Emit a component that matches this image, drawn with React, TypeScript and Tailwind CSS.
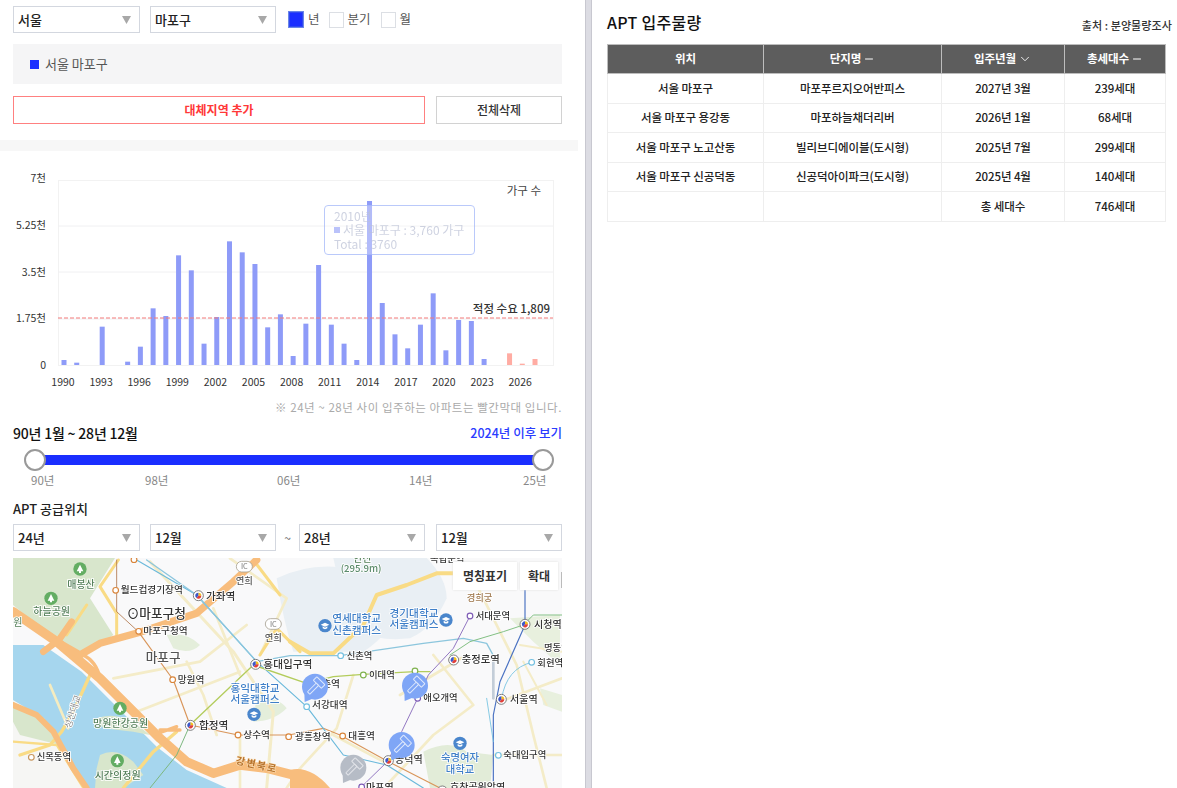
import React from "react";
import { ChevronDown, Minus } from "lucide-react";

const tops: [number, number][] = [
  [1990, 585], [1991, 593], [1993, 485], [1995, 590], [1996, 545], [1997, 430], [1998, 453], [1999, 271],
  [2000, 316], [2001, 536], [2002, 456], [2003, 229], [2004, 262], [2005, 297], [2006, 487], [2007, 448],
  [2008, 573], [2009, 476], [2010, 300], [2011, 479], [2012, 536], [2013, 585], [2014, 108], [2015, 414],
  [2016, 508], [2017, 550], [2018, 479], [2019, 385], [2020, 556], [2021, 465], [2022, 468], [2023, 582],
  [2025, 565], [2026, 596], [2027, 582],
];

function Select({ label, className }: { label: string; className: string }) {
  return (
    <div className={`flex h-[27px] items-center justify-between border border-[#d3d7df] bg-white pl-[4px] pr-[8px] text-[13px] font-medium text-[#222] ${className}`}>
      <span>{label}</span>
      <svg width="9" height="8" viewBox="0 0 9 8"><path d="M0 0H9L4.500 8Z" fill="#a8a8a8" /></svg>
    </div>
  );
}

function Check({ label, on, className }: { label: string; on?: boolean; className: string }) {
  return (
    <div className={`flex items-center gap-[4px] text-[12.500px] text-[#555] ${className}`}>
      <span className={on ? "h-[17px] w-[16px] border border-[#6a86e8] bg-[#1a2eff] shadow-[inset_0_0_0_1px_#3048f0]" : "h-[16px] w-[15px] border border-[#dcdfe4] bg-white"} />
      <span>{label}</span>
    </div>
  );
}

function Chart() {
  return (
    <div className="relative h-[240px] w-[578px]">
      <svg width="578" height="240" viewBox="0 160 578 240" className="block">
        <rect x="58.500" y="180.500" width="495" height="185" fill="none" stroke="#f2f2f2" />
        {[226, 272, 319].map((y) => (
          <line key={y} x1="58" x2="553" y1={y} y2={y} stroke="#f0f0f2" />
        ))}
        {[["7천", 178], ["5.25천", 225], ["3.5천", 272], ["1.75천", 318], ["0", 365]].map(([t, y]) => (
          <text key={t} x="46" y={Number(y) + 4} textAnchor="end" fontSize="10.500" fill="#333">{t}</text>
        ))}
        {tops.map(([yr, z]) => {
          const h = (600 - z) / 3;
          const x = 64 + (yr - 1990) * 12.73;
          return <rect key={yr} x={x - 2.5} y={365 - h} width="5" height={h} fill={yr >= 2025 ? "#ffaca3" : "#8e9bf8"} />;
        })}
        <line x1="58" x2="553" y1="318" y2="318" stroke="#f27878" strokeDasharray="4 2" />
        {[1990, 1993, 1996, 1999, 2002, 2005, 2008, 2011, 2014, 2017, 2020, 2023, 2026].map((y, i) => (
          <text key={y} x={63 + i * 38.1} y="386" textAnchor="middle" fontSize="10.500" fill="#333">{y}</text>
        ))}
        <text x="541" y="195" textAnchor="end" fontSize="11.500" fill="#444">가구 수</text>
        <text x="550" y="313" textAnchor="end" fontSize="11.500" fontWeight="500" fill="#333">적정 수요 1,809</text>
      </svg>
      <div className="absolute left-[324px] top-[45px] flex h-[50px] w-[151px] flex-col justify-center rounded-[4px] border border-[#a9bcf9] bg-white/40 pl-[9px] text-[12px] leading-[14px] text-[#c3c8da] opacity-80">
        <span>2010년</span>
        <span className="flex items-center gap-[3px]"><span className="h-[6px] w-[6px] bg-[#aab4fa]" />서울 마포구 : 3,760 가구</span>
        <span>Total : 3760</span>
      </div>
    </div>
  );
}

function Park({ x, y }: { x: number; y: number }) {
  return (
    <g>
      <circle cx={x} cy={y} r="20" fill="#63ad63" />
      <path d={`M${x} ${y - 13}L${x + 10} ${y + 7}H${x + 3}V${y + 12}H${x - 3}V${y + 7}H${x - 10}Z`} fill="#fff" />
    </g>
  );
}

function School({ x, y }: { x: number; y: number }) {
  return (
    <g>
      <circle cx={x} cy={y} r="20" fill="#4a86cc" />
      <path d={`M${x - 13} ${y - 3}L${x} ${y - 9}L${x + 13} ${y - 3}L${x} ${y + 3}Z`} fill="#fff" />
      <path d={`M${x - 7} ${y + 2}V${y + 8}Q${x} ${y + 13} ${x + 7} ${y + 8}V${y + 2}L${x} ${y + 6}Z`} fill="#fff" />
    </g>
  );
}

function Hub({ x, y }: { x: number; y: number }) {
  return (
    <g>
      <circle cx={x} cy={y} r="15" fill="#fff" stroke="#666" strokeWidth="2.500" />
      <path d={`M${x} ${y}L${x} ${y - 9}A9 9 0 0 1 ${x + 9} ${y}Z`} fill="#f3c01e" />
      <path d={`M${x} ${y}L${x + 9} ${y}A9 9 0 0 1 ${x - 6} ${y + 7}Z`} fill="#e0413a" />
      <path d={`M${x} ${y}L${x - 6} ${y + 7}A9 9 0 0 1 ${x} ${y - 9}Z`} fill="#3b57c8" />
    </g>
  );
}

function Ring({ x, y, c }: { x: number; y: number; c: string }) {
  return <circle cx={x} cy={y} r="8.500" fill="#fff" stroke={c} strokeWidth="3.500" />;
}

function Pin({ x, y, gray }: { x: number; y: number; gray?: boolean }) {
  const fill = gray ? "#b6bcc6" : "#7fa6f6";
  const line = gray ? "#e2e4e9" : "#dfe9fc";
  return (
    <g>
      <path d={`M${x - 32} ${y + 18}L${x - 31} ${y + 46}L${x - 4} ${y + 35}Z`} fill={fill} />
      <circle cx={x} cy={y} r="39" fill={fill} />
      <g transform={`rotate(45 ${x} ${y})`}>
        <rect x={x - 17} y={y - 25} width="34" height="15" rx="1.500" fill={fill} stroke={line} strokeWidth="3" />
        <rect x={x - 5} y={y - 10} width="10" height="37" rx="1.500" fill={fill} stroke={line} strokeWidth="3" />
      </g>
    </g>
  );
}

type L = [number, number, string, number?, string?, ("middle" | "start")?];

const labelsA: L[] = [
  [243, 100, "매봉산", 30, "#55805a", "middle"],
  [155, 181, "하늘공원", 30, "#55805a", "middle"],
  [362, 115, "월드컵경기장역", 29],
  [380, 190, "⊙마포구청", 38],
  [430, 238, "마포구청역", 29],
  [437, 322, "마포구", 38, "#555"],
  [533, 384, "망원역", 29],
  [765, 410, "홍익대학교", 32, "#3f7fc8", "middle"],
  [765, 444, "서울캠퍼스", 32, "#3f7fc8", "middle"],
  [362, 515, "망원한강공원", 30, "#55805a", "middle"],
  [597, 522, "합정역", 32],
  [730, 550, "상수역", 29],
  [110, 616, "신목동역", 28],
  [353, 671, "시간의정원", 30, "#55805a", "middle"],
  [618, 136, "가좌역", 32],
  [733, 86, "연희", 28, "#555", "middle"],
  [820, 257, "연희", 28, "#555", "middle"],
  [790, 338, "홍대입구역", 32],
  [885, 555, "광흥창역", 29],
];

const labelsB: L[] = [
  [190, 20, "안산", 30, "#55805a"],
  [152, 52, "(295.9m)", 29, "#5a8a6a"],
  [200, 202, "연세대학교", 32, "#3f7fc8", "middle"],
  [200, 237, "신촌캠퍼스", 32, "#3f7fc8", "middle"],
  [372, 187, "경기대학교", 32, "#3f7fc8", "middle"],
  [372, 220, "서울캠퍼스", 32, "#3f7fc8", "middle"],
  [170, 313, "신촌역", 28],
  [237, 368, "이대역", 28],
  [515, 324, "충정로역", 31],
  [557, 192, "서대문역", 28],
  [732, 219, "시청역", 30],
  [762, 288, "명동역", 28],
  [742, 333, "회현역", 28],
  [660, 445, "서울역", 30],
  [400, 438, "애오개역", 28],
  [70, 396, "신촌역", 29],
  [66, 460, "서강대역", 29],
  [175, 552, "대흥역", 29],
  [315, 625, "공덕역", 30],
  [510, 618, "숙명여자", 31, "#3f7fc8", "middle"],
  [510, 653, "대학교", 31, "#3f7fc8", "middle"],
  [640, 610, "숙대입구역", 28],
  [480, 708, "효창공원앞역", 30],
  [228, 707, "마포역", 30],
  [530, 138, "경희궁", 28, "#a07a50"],
  [420, 22, "독립문역", 28],
];

function Labels({ items }: { items: L[] }) {
  return (
    <>
      {items.map(([x, y, t, s, c, a]) => (
        <text key={t + x} x={x} y={y} fontSize={s ?? 29} fontWeight="500" fill={c ?? "#333"} textAnchor={a ?? "start"} stroke="#fff" strokeWidth="5" paintOrder="stroke">{t}</text>
      ))}
    </>
  );
}

function Map() {
  const o = "#f8bd7d";
  const y = "#f9db85";
  const c = "#f4ecc8";
  return (
    <div className="relative h-[230px] w-[549px] overflow-hidden">
      <svg width="549" height="230" viewBox="39 9 1647 690" className="block blur-[0.4px]">
        <rect x="39" y="9" width="1647" height="690" fill="#f9f9fa" />
        <path d="M39 9H345L270 130L340 240L255 300L160 250L39 150Z" fill="#d8e6cc" />
        <path d="M39 270H130L245 350L350 455L470 575L560 645L680 699H39Z" fill="#a6d6ee" />
        <path d="M39 435L130 490L200 590L250 699H39Z" fill="#f6f6f4" />
        <path d="M300 600Q350 575 400 620L430 660L370 699H285L290 640Z" fill="#d8e6cc" />
        <path d="M290 490Q340 470 400 500L450 540L400 530L310 520Z" fill="#d8e6cc" />
        <path d="M39 440L120 490L180 570L60 540L39 500Z" fill="#d8e6cc" />
        <path d="M500 240Q560 230 600 270Q570 300 520 280Z" fill="#e4eedb" />
        <path d="M770 420Q840 430 860 460Q820 500 760 500Z" fill="#e4eedb" />
        <path d="M830 70Q930 20 1050 40T1200 150Q1170 240 1090 290Q960 290 880 290Q850 200 830 70Z" fill="#e9eff4" />
        <path d="M1000 9H1280Q1340 70 1340 130Q1300 220 1230 250Q1140 260 1080 230Q1020 120 1000 9Z" fill="#e9eff4" />
        <path d="M1270 590Q1350 550 1400 590L1480 600L1470 699H1290Z" fill="#e2ecd8" />
        <path d="M1530 190L1680 180V330L1600 260Z" fill="#e8f0de" />
        <path d="M1620 400L1686 420V470L1630 450Z" fill="#e8f0de" />

        <g fill="none" strokeLinecap="round" strokeLinejoin="round">
          <path d="M450 20L700 290L820 470L800 699" stroke={c} strokeWidth="9" />
          <path d="M640 160L720 360M340 370L600 320L740 210M410 470L720 350M690 10L860 130L780 300M560 320L610 420L650 540M720 540V699" stroke={c} strokeWidth="8" />
          <path d="M1060 360L1010 520L900 640L860 699M1000 540L1150 620M1300 300L1420 450L1300 540L1160 690M1410 50L1550 330L1600 540L1640 699M1200 420L1400 300M1480 600H1686M1500 440L1686 370" stroke={c} strokeWidth="8" />
          <path d="M1560 270L1686 290M1570 320L1640 450" stroke={c} strokeWidth="6" />
          <path d="M355 15L300 95L350 175V240M260 150L200 240" stroke={y} strokeWidth="9" />
          <path d="M270 360L220 470L185 530L150 570L60 600M370 699L460 590L530 530" stroke={y} strokeWidth="10" />
          <path d="M39 560L170 570L250 699" stroke={y} strokeWidth="7" />
          <path d="M760 15L840 120M780 300L830 220L900 290" stroke={y} strokeWidth="9" />
          <path d="M870 260L930 295H1000L1090 210L1130 120L1220 90L1310 55H1460" stroke={y} strokeWidth="12" />
          <path d="M39 170L170 260L300 370L400 470L480 550L560 620L640 655L720 630L800 640L900 665L960 699" stroke={o} strokeWidth="28" />
          <path d="M170 260L240 300L300 265L420 232L590 175L700 80L770 15" stroke={o} strokeWidth="22" />
          <path d="M170 260L130 290M215 200L180 250" stroke={o} strokeWidth="20" />
          <path d="M250 300Q290 320 300 370M480 525H540M460 540L530 515" stroke={o} strokeWidth="10" />
          <path d="M39 450L110 480L160 530L220 640L260 699" stroke={o} strokeWidth="18" />
          <path d="M150 390L205 520" stroke="#f5ecc0" strokeWidth="8" />

          <path d="M350 15V170L415 230" stroke="#b0764a" strokeWidth="2.500" />
          <path d="M415 230L520 375L570 510" stroke="#d9965a" strokeWidth="3.500" />
          <path d="M570 510L714 540H866L970 520L1020 540L1160 617L1320 699" stroke="#d9965a" strokeWidth="3.500" />
          <path d="M410 15L590 120L770 320L920 455L1030 600L1160 630L1270 699" stroke="#6ab9db" strokeWidth="3.500" />
          <path d="M440 15L590 120L770 320L870 302L1020 302L1270 265L1390 250L1460 265L1490 320" stroke="#8cc6dd" strokeWidth="4" />
          <path d="M570 510L760 330L920 385L1000 365L1090 358L1245 350L1290 350" stroke="#b3cc5c" strokeWidth="4" />
          <path d="M570 510L530 600L450 699" stroke="#7db87f" strokeWidth="3" />
          <path d="M1350 300L1410 260L1510 230L1570 210L1600 180H1686" stroke="#83c084" strokeWidth="3" />
          <path d="M1410 183L1360 280L1285 360L1253 430L1205 530L1165 617L1085 695" stroke="#9378c2" strokeWidth="3" />
          <path d="M1575 70V210L1500 380L1480 480V699" stroke="#4a72c2" strokeWidth="3.500" />
          <path d="M1595 322Q1520 340 1505 430M1460 430L1480 560" stroke="#6fc0e0" strokeWidth="2.500" />
          <path d="M1480 320V430" stroke="#c3cdd8" strokeWidth="8" />
        </g>
        <path d="M870 645Q930 630 990 699H870Z" fill="#f8bd7d" />

        <Park x={240} y={42} />
        <Park x={153} y={130} />
        <Park x={360} y={460} />
        <Park x={352} y={617} />
        <School x={762} y={478} />
        <School x={975} y={212} />
        <School x={1338} y={195} />
        <School x={1380} y={565} />

        {[[733, 35], [820, 207]].map(([x, y2]) => (
          <g key={x}>
            <rect x={x - 24} y={y2 - 16} width="48" height="32" rx="16" fill="#fff" stroke="#a8a294" strokeWidth="2.500" />
            <text x={x} y={y2 + 8} textAnchor="middle" fontSize="22" fill="#777">IC</text>
          </g>
        ))}

        <Ring x={347} y={106} c="#d9853b" />
        <Ring x={416} y={229} c="#d9853b" />
        <Ring x={518} y={374} c="#d9853b" />
        <Ring x={714} y={540} c="#d9853b" />
        <Ring x={866} y={545} c="#d9853b" />
        <Ring x={94} y={607} c="#c8975e" />
        <Ring x={1022} y={302} c="#72bfe0" />
        <Ring x={1090} y={360} c="#7fb24e" />
        <Ring x={1245} y={348} c="#7fb24e" />
        <Ring x={920} y={455} c="#72bfe0" />
        <Ring x={1028} y={543} c="#d9853b" />
        <Ring x={1253} y={430} c="#7d5ab5" />
        <Ring x={1410} y={183} c="#7d5ab5" />
        <Ring x={1595} y={322} c="#72bfe0" />
        <Ring x={1495} y={601} c="#72bfe0" />
        <Ring x={1085} y={696} c="#7d5ab5" />
        <Ring x={402} y={14} c="#d9853b" />
        <Hub x={595} y={122} />
        <Hub x={767} y={328} />
        <Hub x={571} y={511} />
        <Hub x={1361} y={315} />
        <Hub x={1575} y={208} />
        <Hub x={1504} y={433} />
        <Hub x={1165} y={617} />
        <Hub x={1327} y={708} />
        <text x="40" y="213" fontSize="30" fill="#55805a" stroke="#fff" strokeWidth="5" paintOrder="stroke">원</text>
        <Labels items={labelsA} />
        <g transform="translate(870 0)"><Labels items={labelsB} /></g>
        <text transform="rotate(-72 218 470)" x="218" y="480" fontSize="28" textAnchor="middle" fill="#888" stroke="#fff" strokeWidth="5" paintOrder="stroke">성산대교</text>
        <text transform="rotate(12 770 630)" x="770" y="640" fontSize="30" fontWeight="700" textAnchor="middle" fill="#b8732c" letterSpacing="4" stroke="#fbe0bb" strokeWidth="3" paintOrder="stroke">강변북로</text>

        <Pin x={945} y={395} />
        <Pin x={1245} y={392} />
        <Pin x={1205} y={570} />
        <Pin x={1060} y={638} gray />
      </svg>
      <div className="absolute left-[440px] top-[4px] flex h-[28px] w-[64px] items-center justify-center bg-white text-[12px] font-bold text-[#333] shadow-[0_0_2px_#ddd]">명칭표기</div>
      <div className="absolute left-[507px] top-[4px] flex h-[28px] w-[38px] items-center justify-center bg-white text-[12px] font-bold text-[#333] shadow-[0_0_2px_#ddd]">확대</div>
      <div className="absolute right-0 top-[14px] h-[16px] w-[1px] bg-[#bbb]" />
    </div>
  );
}

const rows = [
  ["서울 마포구", "마포푸르지오어반피스", "2027년 3월", "239세대"],
  ["서울 마포구 용강동", "마포하늘채더리버", "2026년 1월", "68세대"],
  ["서울 마포구 노고산동", "빌리브디에이블(도시형)", "2025년 7월", "299세대"],
  ["서울 마포구 신공덕동", "신공덕아이파크(도시형)", "2025년 4월", "140세대"],
  ["", "", "총 세대수", "746세대"],
];

export default function App() {
  return (
    <div className="flex h-[788px] w-[1177px] overflow-hidden bg-white font-['Noto_Sans_CJK_KR','Noto_Sans',sans-serif] text-[#222]">
      <div className="w-[585px] shrink-0">
        <div className="w-[578px]">
          <div className="flex items-center px-[13px] pt-[6px]">
            <Select label="서울" className="w-[127px]" />
            <Select label="마포구" className="ml-[10px] w-[126px]" />
            <Check label="년" on className="ml-[12px]" />
            <Check label="분기" className="ml-[9px]" />
            <Check label="월" className="ml-[10px]" />
          </div>
          <div className="mx-[13px] mt-[11px] flex h-[40px] w-[549px] items-center gap-[6px] bg-[#f5f5f6] pl-[17px] text-[13px] text-[#555]">
            <span className="h-[9px] w-[9px] bg-[#1a2eff]" />
            서울 마포구
          </div>
          <div className="mx-[13px] mt-[12px] flex w-[549px] gap-[11px]">
            <div className="flex h-[28px] w-[412px] items-center justify-center border border-[#ff8080] text-[12px] font-bold text-[#ff3838]">대체지역 추가</div>
            <div className="flex h-[28px] w-[126px] items-center justify-center border border-[#d2d2d2] text-[12px] font-medium text-[#333]">전체삭제</div>
          </div>
          <div className="mt-[16px] h-[11px] bg-[#f7f7f7]" />
          <div className="mt-[9px]"><Chart /></div>
          <div className="-mt-[1px] pr-[16px] text-right text-[11.500px] leading-[16px] tracking-[0.55px] text-[#aaa]">※ 24년 ~ 28년 사이 입주하는 아파트는 빨간막대 입니다.</div>
          <div className="mt-[8px] flex w-[562px] items-center justify-between pl-[13px] font-medium leading-[20px]">
            <span className="text-[14px] tracking-[-0.2px] text-[#111]">90년 1월 ~ 28년 12월</span>
            <span className="text-[12.500px] text-[#2a3cff]">2024년 이후 보기</span>
          </div>
          <div className="relative ml-[24px] mt-[6px] h-[22px] w-[530px]">
            <div className="absolute left-[11px] right-[11px] top-[6px] h-[10px] bg-[#1a2eff]" />
            <div className="absolute left-0 top-0 h-[22px] w-[22px] rounded-full border-2 border-[#999] bg-white" />
            <div className="absolute right-0 top-0 h-[22px] w-[22px] rounded-full border-2 border-[#999] bg-white" />
          </div>
          <div className="relative h-[20px] text-[11.500px] leading-[19px] text-[#888]">
            <span className="absolute left-[31px] top-0">90년</span>
            <span className="absolute left-[145px] top-0">98년</span>
            <span className="absolute left-[277px] top-0">06년</span>
            <span className="absolute left-[409px] top-0">14년</span>
            <span className="absolute left-[523px] top-0">25년</span>
          </div>
          <div className="mt-[9px] px-[13px] text-[13px] font-medium leading-[18px] text-[#222]">APT 공급위치</div>
          <div className="mt-[6px] flex items-center px-[13px]">
            <Select label="24년" className="w-[127px]" />
            <Select label="12월" className="ml-[10px] w-[126px]" />
            <span className="w-[23px] text-center text-[12px] text-[#666]">~</span>
            <Select label="28년" className="w-[126px]" />
            <Select label="12월" className="ml-[11px] w-[126px]" />
          </div>
          <div className="ml-[13px] mt-[7px]"><Map /></div>
        </div>
      </div>
      <div className="h-full w-[7px] shrink-0 border-x border-[#c8c8d0] bg-[#dcdce3]" />
      <div className="flex-1 pl-[15px] pr-[5px]">
        <div className="flex h-[44px] items-end justify-between pb-[11px]">
          <span className="text-[16px] font-medium leading-[22px] tracking-[0.3px] text-[#111]">APT 입주물량</span>
          <span className="text-[11px] font-medium leading-[16px] tracking-[0.1px] text-[#333]">출처 : 분양물량조사</span>
        </div>
        <table className="w-[558px] table-fixed border-collapse text-center text-[11.500px] font-medium tracking-[-0.1px] text-[#222]">
          <colgroup>
            <col className="w-[156px]" />
            <col className="w-[178px]" />
            <col className="w-[123px]" />
            <col className="w-[101px]" />
          </colgroup>
          <thead>
            <tr className="h-[29px] bg-[#5d5d5d] font-bold text-white">
              <th className="border border-[#bdbdbd] font-bold">위치</th>
              <th className="border border-[#bdbdbd] font-bold"><span className="inline-flex items-center gap-[2px]">단지명 <Minus size={12} /></span></th>
              <th className="border border-[#bdbdbd] font-bold"><span className="inline-flex items-center gap-[2px]">입주년월 <ChevronDown size={14} strokeWidth={1.5} /></span></th>
              <th className="border border-[#bdbdbd] font-bold"><span className="inline-flex items-center gap-[2px]">총세대수 <Minus size={12} /></span></th>
            </tr>
          </thead>
          <tbody>
            {rows.map((r, i) => (
              <tr key={i} className="h-[29.500px]">
                {r.map((c, j) => (
                  <td key={j} className="border border-[#eeeeee]">{c}</td>
                ))}
              </tr>
            ))}
          </tbody>
        </table>
      </div>
    </div>
  );
}
